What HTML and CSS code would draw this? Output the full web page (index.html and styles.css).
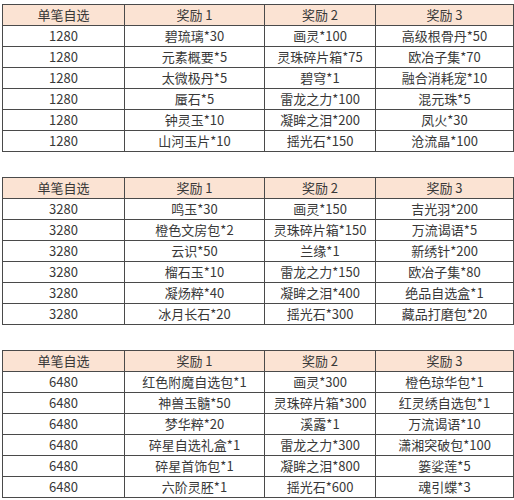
FILE: index.html
```html
<!DOCTYPE html>
<html lang="zh">
<head>
<meta charset="utf-8">
<link rel="stylesheet" href="styles.css">
</head>
<body>
<div class="page">
<table class="rt">
<colgroup><col class="c1"><col class="c2"><col class="c3"><col class="c4"></colgroup>
<thead><tr><th>单笔自选</th><th>奖励 1</th><th>奖励 2</th><th>奖励 3</th></tr></thead>
<tbody>
<tr><td>1280</td><td>碧琉璃*30</td><td>画灵*100</td><td>高级根骨丹*50</td></tr>
<tr><td>1280</td><td>元素概要*5</td><td>灵珠碎片箱*75</td><td>欧冶子集*70</td></tr>
<tr><td>1280</td><td>太微极丹*5</td><td>碧穹*1</td><td>融合消耗宠*10</td></tr>
<tr><td>1280</td><td>蜃石*5</td><td>雷龙之力*100</td><td>混元珠*5</td></tr>
<tr><td>1280</td><td>钟灵玉*10</td><td>凝眸之泪*200</td><td>凤火*30</td></tr>
<tr><td>1280</td><td>山河玉片*10</td><td>摇光石*150</td><td>沧流晶*100</td></tr>
</tbody>
</table>
<table class="rt">
<colgroup><col class="c1"><col class="c2"><col class="c3"><col class="c4"></colgroup>
<thead><tr><th>单笔自选</th><th>奖励 1</th><th>奖励 2</th><th>奖励 3</th></tr></thead>
<tbody>
<tr><td>3280</td><td>鸣玉*30</td><td>画灵*150</td><td>吉光羽*200</td></tr>
<tr><td>3280</td><td>橙色文房包*2</td><td>灵珠碎片箱*150</td><td>万流谒语*5</td></tr>
<tr><td>3280</td><td>云识*50</td><td>兰缘*1</td><td>新绣针*200</td></tr>
<tr><td>3280</td><td>榴石玉*10</td><td>雷龙之力*150</td><td>欧冶子集*80</td></tr>
<tr><td>3280</td><td>凝炀粹*40</td><td>凝眸之泪*400</td><td>绝品自选盒*1</td></tr>
<tr><td>3280</td><td>冰月长石*20</td><td>摇光石*300</td><td>藏品打磨包*20</td></tr>
</tbody>
</table>
<table class="rt">
<colgroup><col class="c1"><col class="c2"><col class="c3"><col class="c4"></colgroup>
<thead><tr><th>单笔自选</th><th>奖励 1</th><th>奖励 2</th><th>奖励 3</th></tr></thead>
<tbody>
<tr><td>6480</td><td>红色附魔自选包*1</td><td>画灵*300</td><td>橙色琼华包*1</td></tr>
<tr><td>6480</td><td>神兽玉髓*50</td><td>灵珠碎片箱*300</td><td>红灵绣自选包*1</td></tr>
<tr><td>6480</td><td>梦华粹*20</td><td>溪露*1</td><td>万流谒语*10</td></tr>
<tr><td>6480</td><td>碎星自选礼盒*1</td><td>雷龙之力*300</td><td>潇湘突破包*100</td></tr>
<tr><td>6480</td><td>碎星首饰包*1</td><td>凝眸之泪*800</td><td>篓娑莲*5</td></tr>
<tr><td>6480</td><td>六阶灵胚*1</td><td>摇光石*600</td><td>魂引蝶*3</td></tr>
</tbody>
</table>
</div>
</body>
</html>
```
FILE: styles.css
```css
html, body {
  margin: 0;
  padding: 0;
  background: #ffffff;
}
.page {
  padding: 4px 0 0 2px;
  display: flex;
  flex-direction: column;
  gap: 25px;
}
.rt {
  border-collapse: collapse;
  table-layout: fixed;
  width: 511px;
  font-family: "Noto Sans CJK SC", "Liberation Sans", sans-serif;
  font-size: 13px;
  color: #383838;
}
.c1 { width: 122px; }
.c2 { width: 140px; }
.c3 { width: 111px; }
.c4 { width: 138px; }
.rt th, .rt td {
  border: 1px solid #4a4a4a;
  height: 20px;
  padding: 0;
  text-align: center;
  font-weight: normal;
  line-height: 20px;
  white-space: nowrap;
  overflow: hidden;
}
.rt th {
  background: #fbe3d3;
}
```
